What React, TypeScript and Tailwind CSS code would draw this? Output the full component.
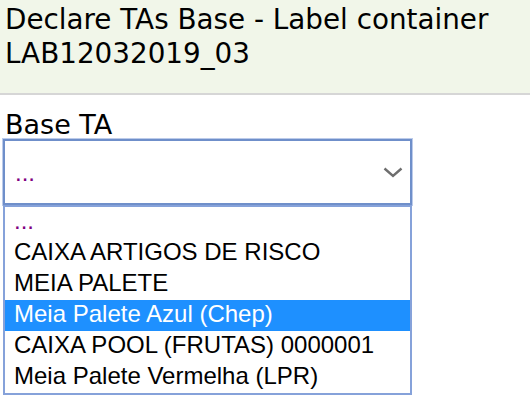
import React from "react";

const options = [
  "...",
  "CAIXA ARTIGOS DE RISCO",
  "MEIA PALETE",
  "Meia Palete Azul (Chep)",
  "CAIXA POOL (FRUTAS) 0000001",
  "Meia Palete Vermelha (LPR)",
];

const selectedIndex = 3;

const App = () => {
  return (
    <div className="min-h-screen bg-white text-black">
      <header className="bg-[#f1f6e9] border-b-2 border-[#d6d6d6] px-[5px] pt-[3px] pb-[22px] font-['DejaVu_Sans',Verdana,sans-serif] text-[27.8px] leading-[34px]">
        <div>Declare TAs Base - Label container</div>
        <div>LAB12032019_03</div>
      </header>

      <div className="pl-[3px] pt-[16px]">
        <label className="block pl-[2px] font-['DejaVu_Sans',Verdana,sans-serif] text-[27px] leading-[28px]">
          Base TA
        </label>

        <div className="font-['Liberation_Sans',Arial,sans-serif] text-[24px]">
          <div className="flex h-[66px] w-[409px] items-center justify-between border-2 border-[#6f8fca] pl-[10px] pr-[7px] shadow-[0_0_0_1px_#bccbea]">
            <span className="leading-[27px] text-[#800080]">...</span>
            <svg width="20" height="11" viewBox="0 0 20 11" fill="none">
              <path
                d="M1.5 1.5 L10 9 L18.5 1.5"
                stroke="#6e6e6e"
                strokeWidth="2.4"
              />
            </svg>
          </div>

          <ul className="w-[409px] border-2 border-[#86a2da]">
            {options.map((opt, i) => (
              <li
                key={opt}
                className={`h-[31px] pl-[9px] leading-[27px] whitespace-nowrap ${
                  i === selectedIndex
                    ? "bg-[#1e90ff] text-white"
                    : opt === "..."
                    ? "text-[#800080]"
                    : "text-black"
                }`}
              >
                {opt}
              </li>
            ))}
          </ul>
        </div>
      </div>
    </div>
  );
};

export default App;
